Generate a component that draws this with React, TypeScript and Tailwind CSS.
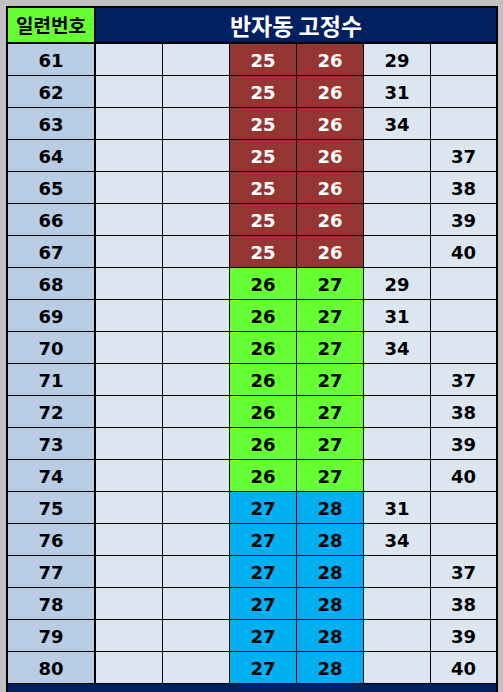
import React from 'react';

type Row = { n: number; a: number; b: number; c?: number; d?: number };

const rows: Row[] = [
  { n: 61, a: 25, b: 26, c: 29 },
  { n: 62, a: 25, b: 26, c: 31 },
  { n: 63, a: 25, b: 26, c: 34 },
  { n: 64, a: 25, b: 26, d: 37 },
  { n: 65, a: 25, b: 26, d: 38 },
  { n: 66, a: 25, b: 26, d: 39 },
  { n: 67, a: 25, b: 26, d: 40 },
  { n: 68, a: 26, b: 27, c: 29 },
  { n: 69, a: 26, b: 27, c: 31 },
  { n: 70, a: 26, b: 27, c: 34 },
  { n: 71, a: 26, b: 27, d: 37 },
  { n: 72, a: 26, b: 27, d: 38 },
  { n: 73, a: 26, b: 27, d: 39 },
  { n: 74, a: 26, b: 27, d: 40 },
  { n: 75, a: 27, b: 28, c: 31 },
  { n: 76, a: 27, b: 28, c: 34 },
  { n: 77, a: 27, b: 28, d: 37 },
  { n: 78, a: 27, b: 28, d: 38 },
  { n: 79, a: 27, b: 28, d: 39 },
  { n: 80, a: 27, b: 28, d: 40 },
];

// colour of the fixed-number pair by group
const pairStyle = (a: number) => {
  if (a === 25) return 'bg-[#963634] text-white';
  if (a === 26) return 'bg-[#66ff33] text-black';
  return 'bg-[#00b0f0] text-black';
};

const cell = 'h-full flex items-center justify-center pt-[1px]';

export default function App() {
  return (
    <div
      className="w-[503px] h-[692px] overflow-hidden bg-[#c0c0c0] pt-[6px] pl-[6px]"
      style={{ fontFamily: '"DejaVu Sans", sans-serif' }}
    >
      <div className="w-[492px] border-2 border-black border-b-0">
        {/* header */}
        <div className="flex h-[36px] border-b-2 border-black">
          <div
            className="w-[88px] border-r-2 border-black bg-[#66ff33] flex items-center justify-center text-[19px] font-bold text-black"
            style={{ fontFamily: '"Noto Sans CJK KR", sans-serif' }}
          >
            일련번호
          </div>
          <div
            className="flex-1 bg-[#002060] flex items-center justify-center text-[23px] font-bold text-white pt-[1px]"
            style={{ fontFamily: '"Noto Sans CJK KR", sans-serif' }}
          >
            반자동 고정수
          </div>
        </div>

        {/* rows */}
        {rows.map((r) => (
          <div key={r.n} className="flex h-[32px] border-b border-black text-[18px] font-bold">
            <div className={`${cell} w-[88px] border-r-2 border-black bg-[#b8cce4] text-black`}>{r.n}</div>
            <div className={`${cell} w-[67px] border-r border-black bg-[#dce6f1]`}></div>
            <div className={`${cell} w-[67px] border-r border-black bg-[#dce6f1]`}></div>
            <div className={`${cell} w-[67px] border-r border-black ${pairStyle(r.a)}`}>{r.a}</div>
            <div className={`${cell} w-[67px] border-r border-black ${pairStyle(r.a)}`}>{r.b}</div>
            <div className={`${cell} w-[67px] border-r border-black bg-[#dce6f1] text-black`}>{r.c ?? ''}</div>
            <div className={`${cell} w-[65px] bg-[#dce6f1] text-black`}>{r.d ?? ''}</div>
          </div>
        ))}

        <div className="h-[12px] bg-[#002060]"></div>
      </div>
    </div>
  );
}
